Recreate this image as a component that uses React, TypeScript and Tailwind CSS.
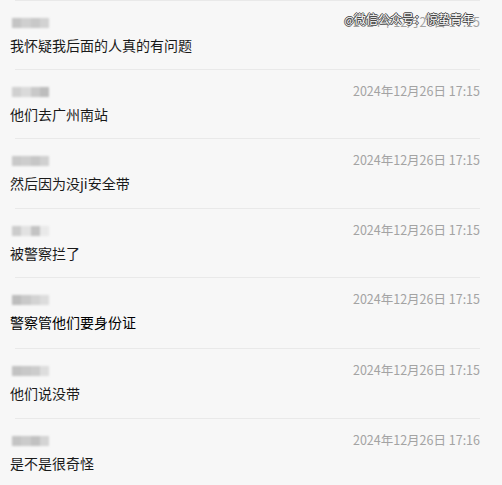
import React from "react";

type Msg = {
  text: string;
  time: string;
  rowH: string;
  name: string[];
  dark?: boolean;
};

const messages: Msg[] = [
  { text: "我怀疑我后面的人真的有问题", time: "2024年12月26日 17:15", rowH: "h-[68px]", name: ["#c4c4c4", "#cfcfcf", "#c8c8c8", "#d2d2d2"] },
  { text: "他们去广州南站", time: "2024年12月26日 17:15", rowH: "h-[68px]", name: ["#d0d0d0", "#dadada", "#c9c9c9", "#bdbdbd"] },
  { text: "然后因为没ji安全带", time: "2024年12月26日 17:15", rowH: "h-[69px]", name: ["#c9c9c9", "#cdcdcd", "#c6c6c6", "#d0d0d0"] },
  { text: "被警察拦了", time: "2024年12月26日 17:15", rowH: "h-[68px]", name: ["#cccccc", "#e2e2e2", "#c3c3c3", "#e9e9e9"] },
  { text: "警察管他们要身份证", time: "2024年12月26日 17:15", rowH: "h-[70px]", name: ["#bdbdbd", "#c9c9c9", "#d3d3d3", "#dcdcdc"], dark: true },
  { text: "他们说没带", time: "2024年12月26日 17:15", rowH: "h-[69px]", name: ["#c2c2c2", "#c8c8c8", "#cccccc", "#dddddd"] },
  { text: "是不是很奇怪", time: "2024年12月26日 17:16", rowH: "h-[67px]", name: ["#c4c4c4", "#cbcbcb", "#c1c1c1", "#d4d4d4"] },
];

function BlurName({ colors }: { colors: string[] }) {
  return (
    <div className="flex h-[10px] w-[37px] overflow-hidden blur-[0.8px]">
      {colors.map((c, i) => (
        <div key={i} className="h-full flex-1" style={{ backgroundColor: c }} />
      ))}
    </div>
  );
}

export default function App() {
  return (
    <div
      className="relative h-[485px] w-[502px] overflow-hidden bg-[#f7f7f7]"
      style={{ fontFamily: '"Microsoft YaHei", "Noto Sans CJK SC", "Noto Sans", sans-serif' }}
    >
      {/* watermark */}
      <div
        className="absolute right-[28px] top-[11px] z-10 text-[12px] leading-[16px] text-white"
        style={{
          textShadow:
            "1px 0 0 #444, -1px 0 0 #444, 0 1px 0 #444, 0 -1px 0 #444",
        }}
      >
        <span className="text-[10px]">@</span>微信公众号：惊蛰青年
      </div>

      {messages.map((m, i) => (
        <div key={i}>
          <div className="ml-[15px] h-px w-[465px] bg-[#e9e9e9]" />
          <div className={`${m.rowH} pl-[10px] pr-[22px] pt-[14px]`}>
            <div className="flex h-[15px] items-center justify-between pl-[2px]">
              <BlurName colors={m.name} />
              <span className="text-[12.5px] text-[#a3a3a3]">{m.time}</span>
            </div>
            <div
              className={`mt-[5px] text-[14px] leading-[20px] ${
                m.dark ? "text-black" : "text-[#1a1a1a]"
              }`}
            >
              {m.text}
            </div>
          </div>
        </div>
      ))}
    </div>
  );
}
